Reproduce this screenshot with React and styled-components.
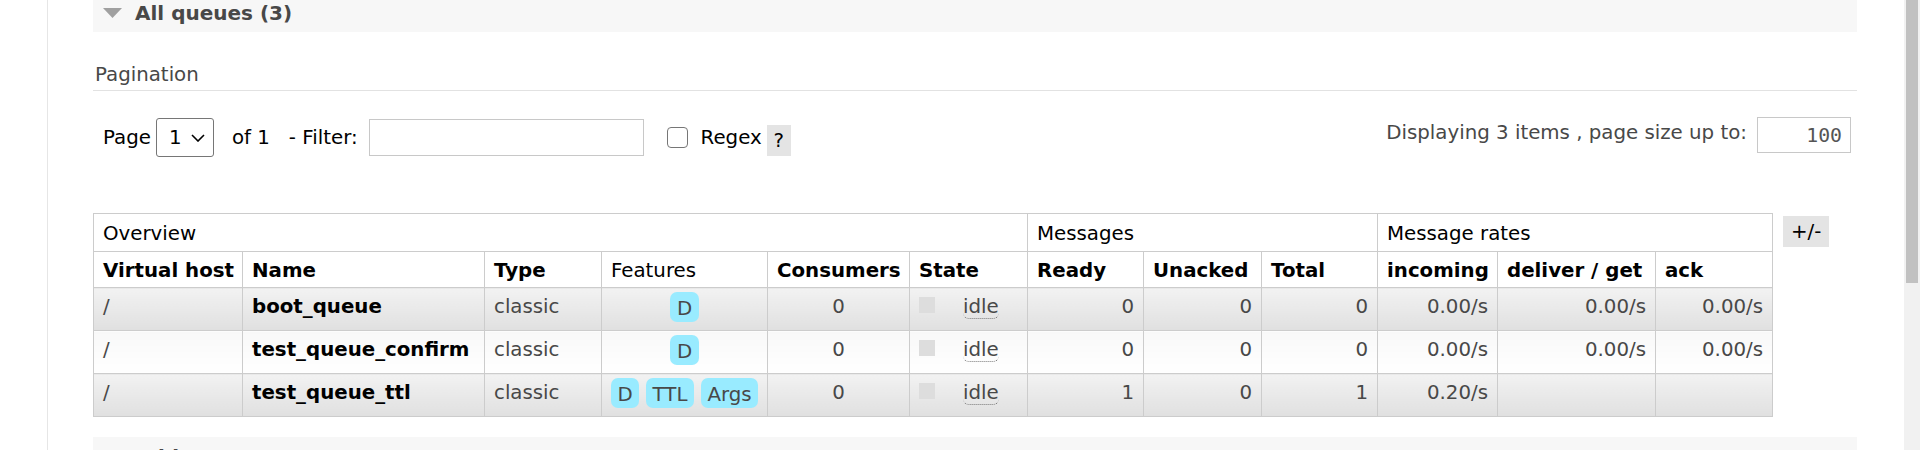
import React from "react";
import styled, { createGlobalStyle } from "styled-components";

const GlobalStyle = createGlobalStyle`
  html, body { margin: 0; padding: 0; background: #fff; }
  body {
    font-family: "DejaVu Sans", Verdana, sans-serif;
    font-size: 19.8px;
    color: #484848;
    overflow: hidden;
  }
  * { box-sizing: border-box; }
`;

const Viewport = styled.div`
  display: flex;
  height: 450px;
  overflow: hidden;
`;

const LeftRail = styled.div`
  flex: 0 0 48px;
  border-right: 1px solid #e6e6e6;
`;

const Main = styled.main`
  flex: 1;
  min-width: 0;
  padding: 0 47px 0 45px;
  margin-top: -7px;
`;

const ScrollTrack = styled.div`
  flex: 0 0 16px;
  background: #f1f1f1;
  padding-left: 2px;
`;

const ScrollThumb = styled.div`
  width: 12px;
  height: 283px;
  background: #c1c1c1;
`;

const SectionHeader = styled.h2`
  margin: ${(p) => (p.$gap ? `${p.$gap}px` : 0)} 0 0;
  height: 39px;
  background: #f7f7f7;
  display: flex;
  align-items: flex-start;
  padding: 8px 0 0 10px;
  font-size: 20px;
  font-weight: bold;
  line-height: normal;
  color: #484848;
  white-space: nowrap;
  overflow: hidden;
`;

const Toggle = styled.svg`
  flex: none;
  width: 19px;
  height: 10px;
  margin: 7px 13px 0 0;
`;

const SubHeading = styled.h3`
  margin: 31px 0 0;
  padding: 0 0 4px 2px;
  font-size: 19.8px;
  font-weight: normal;
  line-height: normal;
  color: #484848;
  border-bottom: 1px solid #e2e2e2;
`;

const PaginationRow = styled.div`
  display: flex;
  justify-content: space-between;
  align-items: center;
  margin-top: 26px;
  height: 41px;
  padding: 0 6px 0 10px;
`;

const Controls = styled.div`
  display: flex;
  align-items: center;
  color: #000;
  white-space: nowrap;
`;

const Label = styled.span`
  margin-left: ${(p) => p.$ml || 0}px;
`;

const SelectBox = styled.div`
  display: flex;
  align-items: center;
  width: 58px;
  height: 39px;
  margin-left: 5px;
  padding-left: 12px;
  border: 1px solid #767676;
  border-radius: 3px;
  background: #fff;
  color: #000;
`;

const Chevron = styled.svg`
  width: 14px;
  height: 8px;
  margin-left: 10px;
`;

const TextInput = styled.input`
  width: ${(p) => p.$w}px;
  height: ${(p) => p.$h}px;
  margin-left: ${(p) => p.$ml || 0}px;
  border: 1px solid #c8c8c8;
  border-radius: 0;
  background: #fff;
  padding: 0 8px;
  font-family: ${(p) => (p.$mono ? '"DejaVu Sans Mono", "Liberation Mono", monospace' : 'inherit')};
  font-size: 19.8px;
  color: #555;
  text-align: ${(p) => p.$align || "left"};
  outline: none;
`;

const CheckBox = styled.input`
  appearance: none;
  width: 21px;
  height: 21px;
  margin: 0 0 0 23px;
  border: 1px solid #767676;
  border-radius: 4px;
  background: #fff;
`;

const HelpTag = styled.span`
  display: flex;
  align-items: center;
  justify-content: center;
  width: 24px;
  height: 31px;
  margin: 6px 0 0 5px;
  background: #e4e4e4;
  color: #000;
`;

const PageInfo = styled.div`
  align-self: flex-start;
  display: flex;
  align-items: center;
  color: #484848;
  white-space: nowrap;
`;

const InfoText = styled.span`
  margin-bottom: 5px;
`;

const QueueTable = styled.table`
  margin-top: 55px;
  border-collapse: collapse;
  table-layout: fixed;
  width: 1739px;
`;

const Row = styled.tr`
  height: ${(p) => p.$h}px;
`;

const HeadCell = styled.th`
  border: 1px solid #ccc;
  background: #fff;
  color: #000;
  text-align: left;
  vertical-align: top;
  padding: ${(p) => p.$pt}px 9px 0;
  font-weight: ${(p) => (p.$bold ? "bold" : "normal")};
  white-space: nowrap;
  overflow: hidden;
`;

const PlusMinusCell = styled.th`
  border: none;
  vertical-align: top;
  text-align: left;
  padding: 2px 0 0 10px;
  font-weight: normal;
`;

const PlusMinus = styled.span`
  display: inline-block;
  height: 31px;
  line-height: 31px;
  padding: 0 8px;
  background: #e4e4e4;
  color: #000;
`;

const Cell = styled.td`
  border: 1px solid #ccc;
  background: ${(p) =>
    p.$alt ? "linear-gradient(#f2f2f2, #e0e0e0)" : "linear-gradient(#f8f8f8, #ffffff)"};
  vertical-align: top;
  padding: 7px 9px 0;
  text-align: ${(p) => p.$align || "left"};
  font-weight: ${(p) => (p.$bold ? "bold" : "normal")};
  color: ${(p) => (p.$bold ? "#000" : "#484848")};
  white-space: nowrap;
  overflow: hidden;
`;

const FeatureList = styled.div`
  display: flex;
  justify-content: center;
  gap: 7px;
  margin-top: -3px;
`;

const Badge = styled.span`
  display: inline-block;
  height: 30px;
  padding: 4px 6.5px 0;
  line-height: 26px;
  border-radius: 7px;
  background: #99ebff;
  color: #484848;
`;

const StatusSquare = styled.span`
  display: inline-block;
  width: 16px;
  height: 16px;
  margin: 2px 28px 0 0;
  vertical-align: top;
  background: #dddddd;
`;

const StateText = styled.abbr`
  text-decoration: none;
  border-bottom: 1px dotted #777;
  border-radius: 6px;
`;

const colWidths = [149, 242, 117, 166, 142, 118, 116, 118, 116, 120, 158, 117, 60];

const headers = [
  { label: "Virtual host", bold: true },
  { label: "Name", bold: true },
  { label: "Type", bold: true },
  { label: "Features", bold: false },
  { label: "Consumers", bold: true },
  { label: "State", bold: true },
  { label: "Ready", bold: true },
  { label: "Unacked", bold: true },
  { label: "Total", bold: true },
  { label: "incoming", bold: true },
  { label: "deliver / get", bold: true },
  { label: "ack", bold: true },
];

const queues = [
  {
    vhost: "/", name: "boot_queue", type: "classic", features: ["D"], consumers: 0,
    state: "idle", ready: 0, unacked: 0, total: 0, incoming: "0.00/s", deliver: "0.00/s", ack: "0.00/s",
  },
  {
    vhost: "/", name: "test_queue_confirm", type: "classic", features: ["D"], consumers: 0,
    state: "idle", ready: 0, unacked: 0, total: 0, incoming: "0.00/s", deliver: "0.00/s", ack: "0.00/s",
  },
  {
    vhost: "/", name: "test_queue_ttl", type: "classic", features: ["D", "TTL", "Args"], consumers: 0,
    state: "idle", ready: 1, unacked: 0, total: 1, incoming: "0.20/s", deliver: "", ack: "",
  },
];

function SectionTitle({ open, children, gap }) {
  return (
    <SectionHeader $gap={gap}>
      <Toggle viewBox="0 0 19 10" aria-hidden="true">
        {open ? (
          <polygon points="0,0 19,0 9.5,10" fill="#a0a0a0" />
        ) : (
          <polygon points="5,0 15,5 5,10" fill="#a0a0a0" />
        )}
      </Toggle>
      {children}
    </SectionHeader>
  );
}

export default function App() {
  return (
    <>
      <GlobalStyle />
      <Viewport>
        <LeftRail />
        <Main>
          <SectionTitle open>All queues (3)</SectionTitle>
          <SubHeading>Pagination</SubHeading>
          <PaginationRow>
            <Controls>
              <Label>Page</Label>
              <SelectBox>
                1
                <Chevron viewBox="0 0 14 8" aria-hidden="true">
                  <polyline points="1,1 7,7 13,1" fill="none" stroke="#000" strokeWidth="1.6" />
                </Chevron>
              </SelectBox>
              <Label $ml={18}>of 1</Label>
              <Label $ml={19}>- Filter:</Label>
              <TextInput type="text" $w={275} $h={37} $ml={11} />
              <CheckBox type="checkbox" />
              <Label $ml={13}>Regex</Label>
              <HelpTag>?</HelpTag>
            </Controls>
            <PageInfo>
              <InfoText>Displaying 3 items , page size up to:</InfoText>
              <TextInput type="text" defaultValue="100" $w={94} $h={36} $ml={10} $mono $align="right" />
            </PageInfo>
          </PaginationRow>

          <QueueTable>
            <colgroup>
              {colWidths.map((w, i) => (
                <col key={i} style={{ width: w }} />
              ))}
            </colgroup>
            <thead>
              <Row $h={38}>
                <HeadCell colSpan={6} $pt={8}>Overview</HeadCell>
                <HeadCell colSpan={3} $pt={8}>Messages</HeadCell>
                <HeadCell colSpan={3} $pt={8}>Message rates</HeadCell>
                <PlusMinusCell>
                  <PlusMinus>+/-</PlusMinus>
                </PlusMinusCell>
              </Row>
              <Row $h={36}>
                {headers.map((h) => (
                  <HeadCell key={h.label} $pt={7} $bold={h.bold}>
                    {h.label}
                  </HeadCell>
                ))}
              </Row>
            </thead>
            <tbody>
              {queues.map((q, i) => {
                const alt = i % 2 === 0;
                return (
                  <Row key={q.name} $h={43}>
                    <Cell $alt={alt}>{q.vhost}</Cell>
                    <Cell $alt={alt} $bold>{q.name}</Cell>
                    <Cell $alt={alt}>{q.type}</Cell>
                    <Cell $alt={alt}>
                      <FeatureList>
                        {q.features.map((f) => (
                          <Badge key={f}>{f}</Badge>
                        ))}
                      </FeatureList>
                    </Cell>
                    <Cell $alt={alt} $align="center">{q.consumers}</Cell>
                    <Cell $alt={alt}>
                      <StatusSquare />
                      <StateText title="idle">{q.state}</StateText>
                    </Cell>
                    <Cell $alt={alt} $align="right">{q.ready}</Cell>
                    <Cell $alt={alt} $align="right">{q.unacked}</Cell>
                    <Cell $alt={alt} $align="right">{q.total}</Cell>
                    <Cell $alt={alt} $align="right">{q.incoming}</Cell>
                    <Cell $alt={alt} $align="right">{q.deliver}</Cell>
                    <Cell $alt={alt} $align="right">{q.ack}</Cell>
                  </Row>
                );
              })}
            </tbody>
          </QueueTable>

          <SectionTitle gap={20}>Add a new queue</SectionTitle>
        </Main>
        <ScrollTrack>
          <ScrollThumb />
        </ScrollTrack>
      </Viewport>
    </>
  );
}
